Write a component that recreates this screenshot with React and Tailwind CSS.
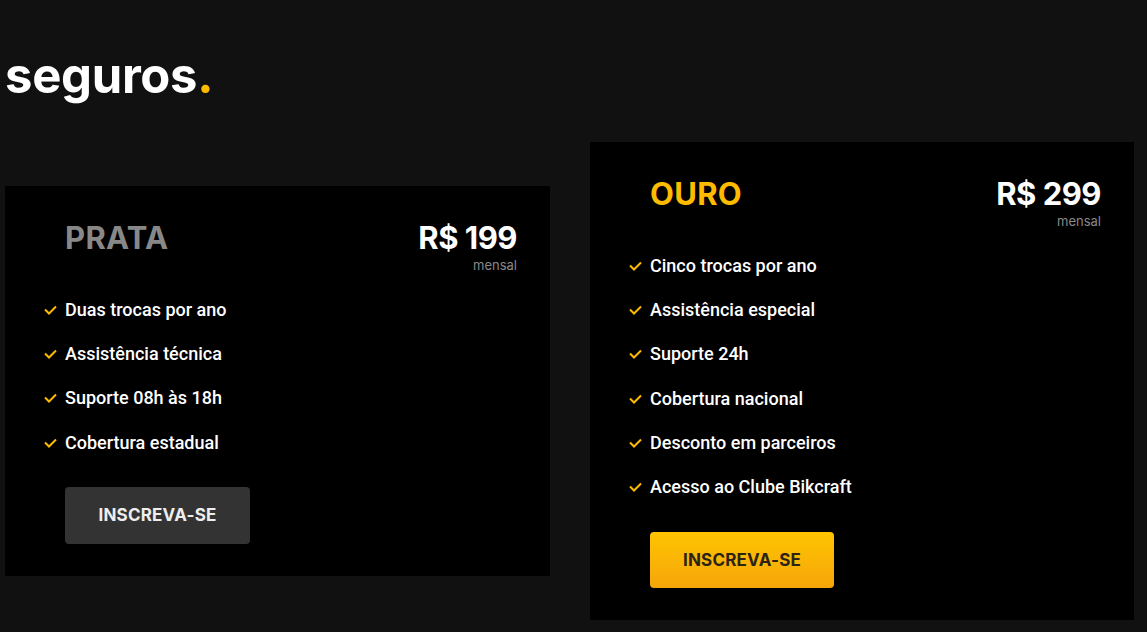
import React from "react";

const Check = () => (
  <svg width="13" height="10" viewBox="0 0 13 10" fill="none" className="shrink-0">
    <path d="M1 4.5 L5 8.5 L12 1.5" stroke="#FFBB00" strokeWidth="2" />
  </svg>
);

const head = { fontFamily: "Inter, 'Open Sans', sans-serif" };
const body = { fontFamily: "Roboto, 'Liberation Sans', sans-serif" };

function Card({ title, titleColor, price, items, button, className, btnWrap }) {
  return (
    <div className={"bg-black pl-[39px] pr-[33px] pt-[32px] " + className}>
      <div className="flex items-start justify-between">
        <h2 style={head} className={"pl-[21px] text-[31px] leading-[40px] font-bold tracking-[0.3px] " + titleColor}>{title}</h2>
        <div className="flex flex-col items-end">
          <span style={head} className="text-[31px] leading-[40px] font-bold tracking-[-0.5px] text-white">{price}</span>
          <span style={head} className="text-[13px] leading-[14px] text-[#888]">mensal</span>
        </div>
      </div>
      <ul className="mt-[26px] flex flex-col gap-[20.2px]">
        {items.map((t) => (
          <li key={t} className="flex items-center gap-[8px] h-[24px]">
            <Check />
            <span style={body} className="text-[18px] leading-[24px] font-medium text-white">{t}</span>
          </li>
        ))}
      </ul>
      <div className={"ml-[21px] " + btnWrap}>{button}</div>
    </div>
  );
}

export default function App() {
  return (
    <div className="min-h-screen w-full bg-[#111] overflow-hidden">
      <div className="pl-[5px] pt-[44px]">
        <h1 style={head} className="text-[49px] leading-[64px] font-bold text-white tracking-[-0.3px]">
          seguros<span className="text-[#FFBB00]">.</span>
        </h1>
        <div className="mt-[34px] grid grid-cols-[545px_544px] gap-x-[40px] items-start">
          <Card
            className="mt-[44px] pb-[32px]"
            btnWrap="mt-[32.4px]"
            title="PRATA"
            titleColor="text-[#888]"
            price="R$ 199"
            items={["Duas trocas por ano", "Assistência técnica", "Suporte 08h às 18h", "Cobertura estadual"]}
            button={
              <button style={head} className="w-[185px] h-[57px] rounded-[4px] bg-[#333] text-[#eee] text-[17px] font-bold tracking-[0.2px]">
                INSCREVA-SE
              </button>
            }
          />
          <Card
            className="pb-[32px]"
            btnWrap="mt-[33.5px]"
            title="OURO"
            titleColor="text-[#FFBB00]"
            price="R$ 299"
            items={["Cinco trocas por ano", "Assistência especial", "Suporte 24h", "Cobertura nacional", "Desconto em parceiros", "Acesso ao Clube Bikcraft"]}
            button={
              <button style={head} className="w-[184px] h-[56px] rounded-[4px] bg-gradient-to-b from-[#FFC400] to-[#F5A50A] text-[#2b2414] text-[17px] font-bold tracking-[0.2px]">
                INSCREVA-SE
              </button>
            }
          />
        </div>
      </div>
    </div>
  );
}
